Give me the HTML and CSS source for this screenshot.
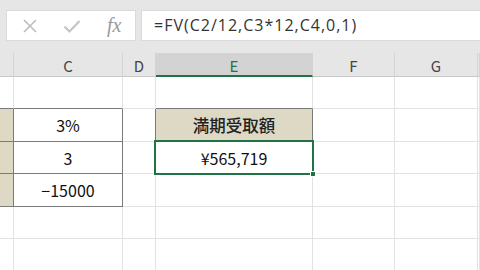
FILE: index.html
```html
<!DOCTYPE html>
<html lang="ja">
<head>
<meta charset="utf-8">
<link rel="stylesheet" href="styles.css">
</head>
<body>
<div class="topbar">
  <div class="iconbox">
    <svg class="ico" width="16" height="16" viewBox="0 0 16 16"><path d="M2 2 L14 14 M14 2 L2 14" stroke="#bdbdbd" stroke-width="1.6" fill="none"/></svg>
    <svg class="ico" width="18" height="16" viewBox="0 0 18 16"><path d="M1.5 8.5 L6.5 13.5 L16.5 3" stroke="#c4c4c4" stroke-width="2.2" fill="none"/></svg>
    <span class="fx">fx</span>
  </div>
  <div class="formula">=FV(C2/12,C3*12,C4,0,1)</div>
</div>
<div class="sheet">
  <div class="hd"></div><div class="hd">C</div><div class="hd">D</div><div class="hd hd-sel">E</div><div class="hd">F</div><div class="hd">G</div><div class="hd"></div>

  <div class="c dk-b"></div><div class="c dk-b"></div><div class="c"></div><div class="c dk-b"></div><div class="c"></div><div class="c"></div><div class="c"></div>

  <div class="c tan dk-r dk-b"></div><div class="c dk-r dk-b">3%</div><div class="c dk-r"></div><div class="c tan bold dk-r dk-b">満期受取額</div><div class="c"></div><div class="c"></div><div class="c"></div>

  <div class="c tan dk-r dk-b"></div><div class="c dk-r dk-b">3</div><div class="c"></div><div class="c sel">¥565,719<span class="handle"></span></div><div class="c"></div><div class="c"></div><div class="c"></div>

  <div class="c tan dk-r dk-b"></div><div class="c dk-r dk-b">−15000</div><div class="c"></div><div class="c"></div><div class="c"></div><div class="c"></div><div class="c"></div>

  <div class="c"></div><div class="c"></div><div class="c"></div><div class="c"></div><div class="c"></div><div class="c"></div><div class="c"></div>

  <div class="c"></div><div class="c"></div><div class="c"></div><div class="c"></div><div class="c"></div><div class="c"></div><div class="c"></div>
</div>
</body>
</html>
```

FILE: styles.css
```css
* { box-sizing: border-box; }
html, body { margin: 0; padding: 0; }
body {
  width: 480px;
  height: 270px;
  overflow: hidden;
  background: #ffffff;
  font-family: "Noto Sans CJK JP", "Noto Sans", sans-serif;
}
.topbar {
  display: flex;
  gap: 5px;
  height: 53px;
  padding: 10px 0 12px 6px;
  background: #e6e6e6;
}
.iconbox {
  width: 130px;
  height: 31px;
  background: #fff;
  border: 1px solid #dadada;
  display: flex;
  align-items: center;
  padding-left: 15px;
}
.iconbox .ico { flex: none; }
.iconbox .ico:first-child { margin-right: 25px; }
.iconbox .ico:nth-child(2) { margin-right: 26px; }
.fx {
  font-family: "Liberation Serif", serif;
  font-style: italic;
  font-size: 20px;
  color: #9a9a9a;
  line-height: 1;
  margin-top: -2px;
}
.formula {
  flex: 1;
  height: 31px;
  background: #fff;
  border: 1px solid #dadada;
  border-right: none;
  font-family: "Open Sans", sans-serif;
  font-size: 16px;
  letter-spacing: 1px;
  color: #333;
  line-height: 28px;
  padding-left: 12px;
  white-space: nowrap;
}
.sheet {
  display: grid;
  grid-template-columns: 14px 109px 33px 157px 82px 83px 2px;
  grid-template-rows: 24px 32px 33px 32px 33px 32px 32px;
}
.hd {
  background: #e6e6e6;
  border-right: 1px solid #d4d4d4;
  border-bottom: 1px solid #c8c8c8;
  display: flex;
  align-items: center;
  justify-content: center;
  font-size: 15px;
  color: #444;
  padding-top: 1px;
}
.hd-sel {
  background: #d3d3d3;
  color: #217346;
  border-bottom: 2px solid #217346;
  padding-top: 2px;
}
.c {
  border-right: 1px solid #e2e2e2;
  border-bottom: 1px solid #e2e2e2;
  display: flex;
  align-items: center;
  justify-content: center;
  font-size: 16px;
  color: #111;
  white-space: nowrap;
  overflow: visible;
}
.tan { background: #ddd9c4; }
.bold { font-weight: 500; font-size: 16.5px; color: #222; }
.dk-r { border-right-color: #7a7a7a; }
.dk-b { border-bottom-color: #7a7a7a; }
.sel { position: relative; }
.sel::after {
  content: "";
  position: absolute;
  top: -2px;
  left: -2px;
  right: -2px;
  bottom: -2px;
  border: 2px solid #217346;
  z-index: 2;
}
.handle {
  position: absolute;
  right: -4px;
  bottom: -4px;
  width: 6px;
  height: 6px;
  background: #217346;
  border: 1px solid #fff;
  z-index: 3;
}
```
